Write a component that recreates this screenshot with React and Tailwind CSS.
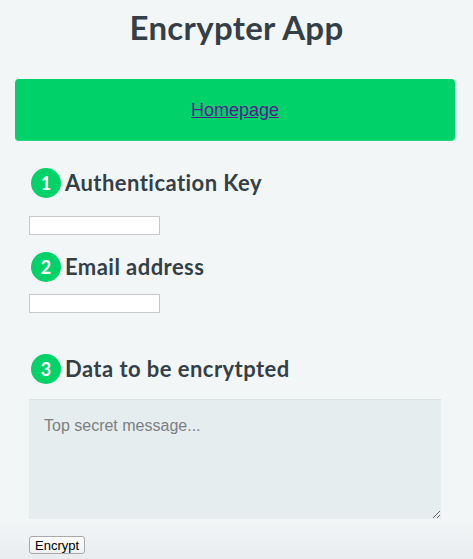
import React from 'react';

const font = { fontFamily: 'Lato, "Noto Sans", sans-serif' };
const arial = { fontFamily: '"Liberation Sans", Arial, sans-serif' };

function Step({ n, label }) {
  return (
    <div className="flex items-center h-[30px] pl-[31px]">
      <span className="w-[30px] h-[30px] rounded-full bg-[#00d26a] text-white font-bold text-[18px] flex items-center justify-center shrink-0">
        {n}
      </span>
      <h2 className="ml-[4px] text-[22px] tracking-[0.45px] font-bold text-[#343f47] leading-none">{label}</h2>
    </div>
  );
}

export default function App() {
  return (
    <div className="min-h-[559px] w-full bg-[#f3f6f7] overflow-hidden" style={font}>
      <h1 className="pt-[9px] text-center text-[33px] tracking-[0.3px] font-bold text-[#343f47] leading-[36px]">
        Encrypter App
      </h1>

      <div className="ml-[15px] mr-[18px] mt-[34px] h-[62px] rounded-[4px] bg-[#00d26a] flex items-center justify-center border-b border-[#1fd67a]">
        <a href="#" className="mt-[2px] text-[18px] text-[#551a8b] underline" style={arial}>
          Homepage
        </a>
      </div>

      <div className="mt-[27px]">
        <Step n="1" label="Authentication Key" />
      </div>
      <input className="block ml-[29px] mt-[18px] w-[131px] h-[19px] bg-white border border-[#c8c8c8]" />

      <div className="mt-[17px]">
        <Step n="2" label="Email address" />
      </div>
      <input className="block ml-[29px] mt-[12px] w-[131px] h-[19px] bg-white border border-[#c8c8c8]" />

      <div className="mt-[41px]">
        <Step n="3" label="Data to be encrytpted" />
      </div>

      <textarea
        placeholder="Top secret message..."
        className="block ml-[29px] mt-[15px] w-[412px] h-[120px] bg-[#e6edef] border-t border-[#dce3e5] px-[15px] py-[14px] text-[16px] text-[#333] placeholder:text-[#7b7f82] outline-none"
        style={arial}
      />

      <div className="pt-[17px] pb-[6px] bg-gradient-to-b from-[#f3f6f7] to-[#e9ecee]">
        <button
          className="block ml-[29px] h-[18px] px-[5px] rounded-[3px] border border-[#a9a9a9] bg-gradient-to-b from-white to-[#f0f0f0] text-[13px] text-black leading-none"
          style={arial}
        >
          Encrypt
        </button>
      </div>
    </div>
  );
}
